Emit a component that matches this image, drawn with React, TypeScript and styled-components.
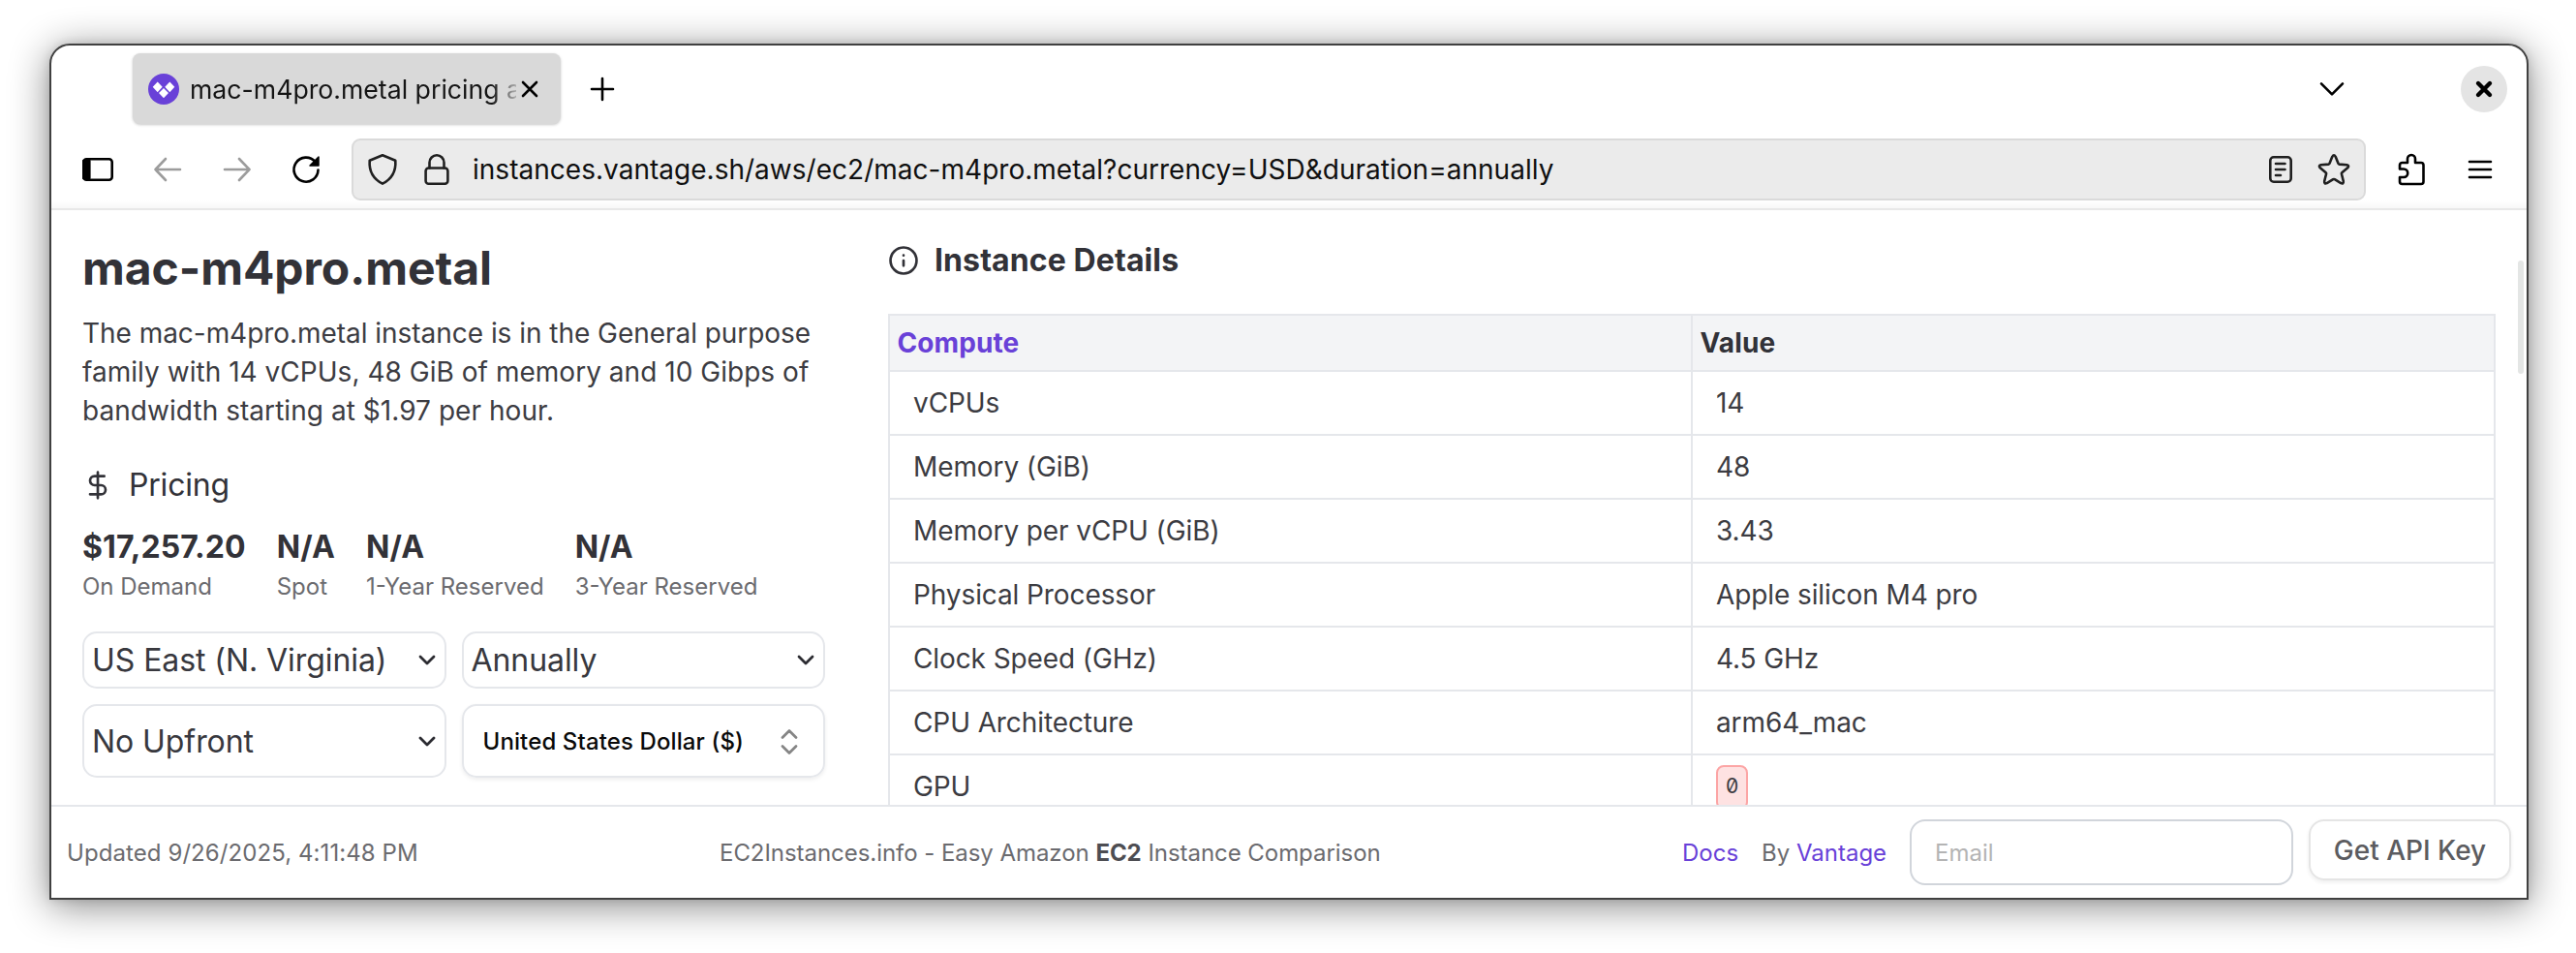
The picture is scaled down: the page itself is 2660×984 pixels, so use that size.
import React from "react";
import styled, { createGlobalStyle } from "styled-components";

const Global = createGlobalStyle`
  * { box-sizing: border-box; }
  body { margin: 0; background: #fff; font-family: Inter, "Liberation Sans", sans-serif; }
`;

const Desktop = styled.div`
  width: 2660px;
  height: 984px;
  padding: 45px 0 0 51px;
  overflow: hidden;
  background: #fff;
`;

const Window = styled.div`
  width: 2560px;
  height: 884px;
  display: flex;
  flex-direction: column;
  background: #fff;
  border: 2px solid #404040;
  border-radius: 21px 21px 0 0;
  box-shadow: 0 6px 40px rgba(0, 0, 0, 0.48), 0 0 10px rgba(0, 0, 0, 0.12);
  overflow: hidden;
`;

const TabStrip = styled.div`
  height: 87px;
  display: flex;
  align-items: center;
  padding: 2px 20px 0 84px;
`;

const Tab = styled.div`
  width: 442px;
  height: 73px;
  display: flex;
  align-items: center;
  padding: 0 23px 0 16px;
  background: #d9d9d9;
  border-radius: 8px;
  box-shadow: 0 1px 3px rgba(0, 0, 0, 0.22);
`;

const TabTitle = styled.div`
  width: 337px;
  margin-left: 11px;
  padding-top: 1px;
  font-size: 26.67px;
  line-height: 40px;
  color: #151515;
  white-space: nowrap;
  mask-image: linear-gradient(to right, #000 312px, transparent 344px);
`;

const Icon = styled.svg<{ $w: number; $h: number; $ml?: number; $color?: string; $sw?: number }>`
  width: ${(p) => p.$w}px;
  height: ${(p) => p.$h}px;
  margin-left: ${(p) => p.$ml ?? 0}px;
  flex: none;
  display: block;
  fill: none;
  stroke: ${(p) => p.$color ?? "#000"};
  stroke-width: ${(p) => p.$sw ?? 2.6};
  stroke-linecap: round;
  stroke-linejoin: round;
`;

const Spacer = styled.div`
  flex: 1;
`;

const CloseButton = styled.div`
  width: 48px;
  height: 48px;
  margin-left: 120px;
  border-radius: 50%;
  background: #e4e4e4;
  display: grid;
  place-items: center;
`;

const NavBar = styled.div`
  height: 83px;
  flex: none;
  display: flex;
  align-items: center;
  padding: 1px 36px 0 32px;
  border-bottom: 2px solid #e8e8e8;
  background: linear-gradient(to bottom, #fff 73px, #f7f7f7 81px);
`;

const AddressBar = styled.div`
  width: 2080px;
  height: 64px;
  flex: none;
  margin-left: 31px;
  display: flex;
  align-items: center;
  padding: 0 14px;
  background: #ebebeb;
  border: 2px solid #dadada;
  border-radius: 9px;
`;

const Address = styled.div`
  flex: 1;
  margin-left: 23px;
  font-size: 28px;
  line-height: 40px;
  letter-spacing: 0.02px;
  color: #101010;
  white-space: nowrap;
`;

const Page = styled.main`
  height: 614px;
  flex: none;
  display: flex;
  overflow: hidden;
  color: #323238;
`;

const Summary = styled.section`
  width: 864px;
  flex: none;
  padding: 32px 62px 0 32px;
`;

const Title = styled.h1`
  margin: 0;
  font-size: 48px;
  line-height: 56px;
  font-weight: 700;
  letter-spacing: -0.05px;
  white-space: nowrap;
`;

const Description = styled.p`
  margin: 19px 0 0;
  font-size: 28px;
  line-height: 40px;
  color: #3c3c42;
  white-space: nowrap;
`;

const Tracked = styled.span<{ $ls: number }>`
  letter-spacing: ${(p) => p.$ls}px;
`;

const PricingHeading = styled.h2`
  margin: 37px 0 0;
  display: flex;
  align-items: center;
  gap: 16px;
  font-size: 32px;
  line-height: 40px;
  font-weight: 400;
  letter-spacing: -0.2px;
`;

const Prices = styled.div`
  margin-top: 24px;
  display: flex;
  gap: 32px;
`;

const Amount = styled.div`
  font-size: 32px;
  line-height: 40px;
  font-weight: 700;
  letter-spacing: 0.1px;
`;

const PriceLabel = styled.div`
  margin-top: 5px;
  font-size: 24px;
  line-height: 32px;
  color: #6b6b6f;
  white-space: nowrap;
`;

const Controls = styled.div`
  margin-top: 30px;
  width: 767px;
  display: grid;
  grid-template-columns: 1fr 1fr;
  grid-template-rows: 59px 76px;
  gap: 16px;
`;

const Select = styled.div<{ $compact?: boolean }>`
  display: flex;
  align-items: center;
  justify-content: space-between;
  padding: ${(p) => (p.$compact ? "1px 26px 0 20px" : "1px 9px 0 8px")};
  border: 2px solid #e5e7eb;
  border-radius: 15px;
  font-size: ${(p) => (p.$compact ? 24 : 32)}px;
  font-weight: ${(p) => (p.$compact ? 500 : 400)};
  letter-spacing: ${(p) => (p.$compact ? 0.12 : -0.07)}px;
  line-height: 40px;
  color: ${(p) => (p.$compact ? "#0a0a0a" : "#38383e")};
  white-space: nowrap;
  box-shadow: ${(p) => (p.$compact ? "0 2px 4px rgba(0, 0, 0, 0.07)" : "none")};
`;

const Details = styled.section`
  width: 1660px;
  flex: none;
  padding-top: 32px;
`;

const DetailsHeading = styled.h2`
  margin: 0 0 35px;
  display: flex;
  align-items: center;
  gap: 16px;
  font-size: 32px;
  line-height: 40px;
  font-weight: 700;
  letter-spacing: 0.1px;
`;

const Table = styled.div`
  border: 2px solid #e5e7eb;
  border-bottom: 0;
`;

const Row = styled.div<{ $head?: boolean }>`
  height: ${(p) => (p.$head ? 58 : 66)}px;
  display: grid;
  grid-template-columns: 829px 1fr;
  border-bottom: 2px solid #e5e7eb;
  background: ${(p) => (p.$head ? "#f3f4f6" : "#fff")};
`;

const Cell = styled.div<{ $head?: boolean; $accent?: boolean }>`
  display: flex;
  align-items: center;
  padding: 0 ${(p) => (p.$head ? 7.5 : 24)}px;
  border-right: ${(p) => (p.$accent ? "2px solid #e5e7eb" : "0")};
  font-size: 28px;
  line-height: 40px;
  font-weight: ${(p) => (p.$head ? 700 : 400)};
  letter-spacing: ${(p) => (p.$head ? 0.1 : -0.1)}px;
  color: ${(p) => (p.$head ? (p.$accent ? "#6941d8" : "#323238") : "#3c3c42")};
  white-space: nowrap;
`;

const ZeroBadge = styled.span`
  width: 33px;
  height: 46px;
  margin-top: 2px;
  display: grid;
  place-items: center;
  padding-bottom: 3px;
  border: 2px solid #fca5a5;
  border-radius: 8px;
  background: #fee2e2;
  font-size: 21px;
  line-height: 28px;
  font-feature-settings: "zero" 1;
`;

const ScrollThumb = styled.div`
  width: 6px;
  height: 117px;
  margin: 52px 0 0 23px;
  border-radius: 3px;
  background: #e4e6e5;
`;

const Footer = styled.footer`
  flex: 1;
  display: flex;
  align-items: flex-start;
  border-top: 2px solid #e5e7eb;
  padding: 13px 16px 0 16px;
  font-size: 24px;
  line-height: 70px;
  color: #6b6b6f;
  white-space: nowrap;
`;

const FooterCell = styled.div<{ $w: number; $ls?: number }>`
  width: ${(p) => p.$w}px;
  flex: none;
  letter-spacing: ${(p) => p.$ls ?? 0}px;
`;

const Strong = styled.b`
  color: #4d4d52;
`;

const Link = styled.a`
  color: #6941d8;
`;

const EmailField = styled.div`
  width: 396px;
  height: 68px;
  flex: none;
  padding: 0 24px;
  border: 2px solid #d1d5db;
  border-radius: 16px;
  line-height: 66px;
  color: #b4b4b4;
`;

const ApiButton = styled.div`
  width: 209px;
  height: 63px;
  flex: none;
  margin-left: 16px;
  border: 2px solid #e5e5e5;
  border-radius: 16px;
  box-shadow: 0 2px 4px rgba(0, 0, 0, 0.07);
  font-size: 28px;
  line-height: 61px;
  font-weight: 500;
  color: #5c5c60;
  text-align: center;
`;

const prices = [
  ["$17,257.20", "On Demand"],
  ["N/A", "Spot"],
  ["N/A", "1-Year Reserved"],
  ["N/A", "3-Year Reserved"],
];

const specs: [string, React.ReactNode][] = [
  ["vCPUs", "14"],
  ["Memory (GiB)", "48"],
  ["Memory per vCPU (GiB)", "3.43"],
  ["Physical Processor", "Apple silicon M4 pro"],
  ["Clock Speed (GHz)", "4.5 GHz"],
  ["CPU Architecture", "arm64_mac"],
  ["GPU", <ZeroBadge key="gpu">0</ZeroBadge>],
];

const SelectArrow = () => (
  <Icon $w={18} $h={12} $color="#2c2c32" $sw={2.8} viewBox="0 0 18 12">
    <path d="M2 2l7 7 7-7" />
  </Icon>
);

export default function App() {
  return (
    <Desktop>
      <Global />
      <Window>
        <TabStrip>
          <Tab>
            <Icon $w={32} $h={32} viewBox="0 0 32 32">
              <circle cx="16" cy="16" r="16" fill="#6941d8" stroke="none" />
              <path
                d="M9.7 8.6l5 5.2-5 5.4-5-5.4zM22.3 8.6l5 5.2-5 5.4-5-5.4zM16 15.1l5 5-5 5.2-5-5.2z"
                fill="#fff"
                stroke="none"
              />
            </Icon>
            <TabTitle>mac-m4pro.metal pricing a</TabTitle>
            <Icon $w={18} $h={18} $ml={5} viewBox="0 0 18 18">
              <path d="M2 2l14 14M16 2L2 16" />
            </Icon>
          </Tab>
          <Icon $w={26} $h={26} $ml={30} viewBox="0 0 26 26">
            <path d="M13 2v22M2 13h22" />
          </Icon>
          <Spacer />
          <Icon $w={26} $h={16} viewBox="0 0 26 16">
            <path d="M2 2.3l11 11 11-11" />
          </Icon>
          <CloseButton>
            <Icon $w={20} $h={20} $sw={4.4} viewBox="0 0 20 20">
              <path d="M4 4l12 12M16 4L4 16" />
            </Icon>
          </CloseButton>
        </TabStrip>
        <NavBar>
          <Icon $w={32} $h={26} viewBox="0 0 32 26">
            <rect x="1.3" y="2.3" width="29.4" height="21.4" rx="3" />
            <path d="M1.3 4h6v18h-6z" fill="#000" />
          </Icon>
          <Icon $w={30} $h={26} $ml={41} $color="#9c9c9c" viewBox="0 0 30 26">
            <path d="M28 13H2.5M13 2L2.5 13 13 24" />
          </Icon>
          <Icon $w={30} $h={26} $ml={42} $color="#9c9c9c" viewBox="0 0 30 26">
            <path d="M2 13h25.5M17 2l10.5 11L17 24" />
          </Icon>
          <Icon $w={32} $h={32} $ml={40} viewBox="0 0 32 32">
            <path d="M28.5 16.5A12.5 12.5 0 1 1 25.5 8" />
            <path d="M29 3v9h-9z" fill="#000" strokeWidth="1.5" />
          </Icon>
          <AddressBar>
            <Icon $w={32} $h={34} $color="#202020" viewBox="0 0 32 34">
              <path d="M16 2.3L29.3 7.8c.6 8.7-1.8 18-13.3 23.8C4.5 25.8 2.1 16.5 2.7 7.8z" />
            </Icon>
            <Icon $w={28} $h={34} $ml={26} $color="#202020" viewBox="0 0 28 34">
              <rect x="2.6" y="15.5" width="22.8" height="16.2" rx="3" />
              <path d="M6.5 15.5V9.8a7.5 7.5 0 0 1 15 0v5.7" />
            </Icon>
            <Address>instances.vantage.sh/aws/ec2/mac-m4pro.metal?currency=USD&amp;duration=annually</Address>
            <Icon $w={26} $h={30} $color="#202020" viewBox="0 0 26 30">
              <rect x="2.3" y="2.3" width="21.4" height="25.4" rx="3.5" />
              <path d="M8 9h9.500M8 15h9.500M8 21h5" />
            </Icon>
            <Icon $w={34} $h={34} $ml={25} $color="#202020" viewBox="0 0 34 34">
              <path d="M15.3 3.8Q17 .8 18.7 3.800L21.500 10.800Q21.800 11.500 22.600 11.600L30.400 12.200Q33.300 12.800 31.200 15.300L25.300 20.200Q24.700 20.700 24.900 21.500L26.800 29Q27.200 32.200 24.200 31.100L17.800 27.200Q17 26.700 16.200 27.200L9.800 31.100Q6.800 32.200 7.200 29L9.100 21.500Q9.300 20.700 8.700 20.200L2.800 15.300Q.7 12.800 3.600 12.200L11.400 11.600Q12.200 11.500 12.500 10.800Z" />
            </Icon>
          </AddressBar>
          <Icon $w={28} $h={34} $ml={33} viewBox="0 0 28 34">
            <path d="M2 13.500V12.500a2.500 2.500 0 0 1 2.500-2.500H10V6a4 4 0 0 1 8 0v4h6a2.500 2.500 0 0 1 2.500 2.500v17a2.500 2.500 0 0 1-2.500 2.500H4.500A2.500 2.500 0 0 1 2 29.500V25h4a4.200 4.200 0 0 0 0-8.500H2z" />
          </Icon>
          <Icon $w={26} $h={24} $ml={44} viewBox="0 0 26 24">
            <path d="M2 4h22M2 12h22M2 20h22" />
          </Icon>
        </NavBar>
        <Page>
          <Summary>
            <Title>mac-m4pro.metal</Title>
            <Description>
              <Tracked $ls={-0.04}>The mac-m4pro.metal instance is in the General purpose</Tracked>
              <br />
              <Tracked $ls={0.03}>family with 14 vCPUs, 48 GiB of memory and 10 Gibps of</Tracked>
              <br />
              <Tracked $ls={0.05}>bandwidth starting at $1.97 per hour.</Tracked>
            </Description>
            <PricingHeading>
              <Icon $w={32} $h={32} $color="#323238" $sw={2} viewBox="0 0 24 24">
                <path d="M12 2v20M17 5H9.500a3.500 3.500 0 0 0 0 7h5a3.500 3.500 0 0 1 0 7H6" />
              </Icon>
              Pricing
            </PricingHeading>
            <Prices>
              {prices.map(([amount, label]) => (
                <div key={label}>
                  <Amount>{amount}</Amount>
                  <PriceLabel>{label}</PriceLabel>
                </div>
              ))}
            </Prices>
            <Controls>
              <Select>
                US East (N. Virginia)
                <SelectArrow />
              </Select>
              <Select>
                Annually
                <SelectArrow />
              </Select>
              <Select>
                No Upfront
                <SelectArrow />
              </Select>
              <Select $compact>
                United States Dollar ($)
                <Icon $w={18} $h={28} $color="#858585" $sw={2.7} viewBox="0 0 18 28">
                  <path d="M2 9.500l7-7 7 7M2 18.500l7 7 7-7" />
                </Icon>
              </Select>
            </Controls>
          </Summary>
          <Details>
            <DetailsHeading>
              <Icon $w={32} $h={32} $color="#323238" $sw={2} viewBox="0 0 24 24">
                <circle cx="12" cy="12" r="10.100" />
                <path d="M12 16v-4M12 8h.01" />
              </Icon>
              Instance Details
            </DetailsHeading>
            <Table>
              <Row $head>
                <Cell $head $accent>Compute</Cell>
                <Cell $head>Value</Cell>
              </Row>
              {specs.map(([name, value]) => (
                <Row key={name}>
                  <Cell $accent>{name}</Cell>
                  <Cell>{value}</Cell>
                </Row>
              ))}
            </Table>
          </Details>
          <ScrollThumb />
        </Page>
        <Footer>
          <FooterCell $w={674} $ls={0.08}>Updated 9/26/2025, 4:11:48 PM</FooterCell>
          <FooterCell $w={994} $ls={-0.05}>
            EC2Instances.info - Easy Amazon <Strong>EC2</Strong> Instance Comparison
          </FooterCell>
          <FooterCell $w={82}>
            <Link>Docs</Link>
          </FooterCell>
          <FooterCell $w={153}>
            By <Link>Vantage</Link>
          </FooterCell>
          <EmailField>Email</EmailField>
          <ApiButton>Get API Key</ApiButton>
        </Footer>
      </Window>
    </Desktop>
  );
}
